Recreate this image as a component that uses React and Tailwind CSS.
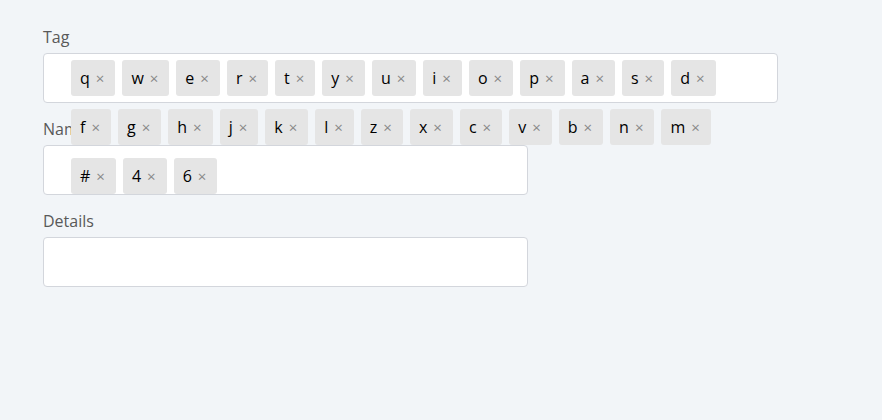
import React from "react";

const row = ["q","w","e","r","t","y","u","i","o","p","a","s","d","f","g","h","j","k","l","z","x","c","v","b","n","m","#","4","6"];

function Chip({ t }) {
  return (
    <div className="flex h-[36px] items-center rounded-[3px] bg-[#e5e5e5] pl-[9px] pr-[11px] text-[16px] text-black">
      <span>{t}</span>
      <span className="ml-[6px] text-[15px] leading-none text-[#888]">×</span>
    </div>
  );
}

export default function App() {
  return (
    <div
      className="min-h-[420px] w-full bg-[#f2f5f8] pl-[43px] pt-[25px]"
      style={{ fontFamily: '"Open Sans", "Noto Sans", sans-serif' }}
    >
      <div className="mb-[14px]">
        <div className="mb-[4px] h-[24px] text-[16px] leading-[24px] text-[#595959]">Tag</div>
        <div className="relative h-[50px] w-[735px] rounded-[4px] border border-[#d3d6dc] bg-white">
          <div className="absolute left-[27px] top-[6px] z-10 flex w-[680px] flex-wrap gap-x-[7px] gap-y-[13px]">
            {row.map((t, i) => (
              <Chip key={i} t={t} />
            ))}
          </div>
        </div>
      </div>
      <div className="mb-[14px]">
        <div className="mb-[4px] h-[24px] text-[16px] leading-[24px] text-[#595959]">Name</div>
        <div className="h-[50px] w-[485px] rounded-[4px] border border-[#d3d6dc] bg-white"></div>
      </div>
      <div>
        <div className="mb-[4px] h-[24px] text-[16px] leading-[24px] text-[#595959]">Details</div>
        <div className="h-[50px] w-[485px] rounded-[4px] border border-[#d3d6dc] bg-white"></div>
      </div>
    </div>
  );
}
